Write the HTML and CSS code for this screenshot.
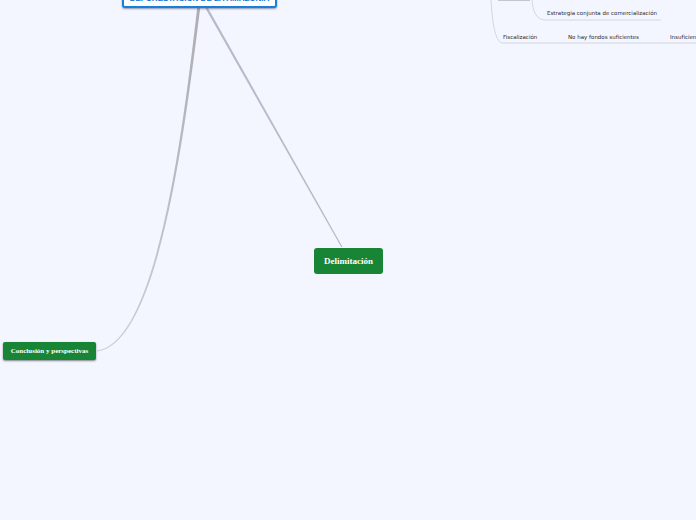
FILE: index.html
```html
<!DOCTYPE html>
<html lang="es">
<head>
<meta charset="utf-8">
<title>Deforestación de la Amazonía</title>
<link rel="stylesheet" href="styles.css">
</head>
<body>
<main class="canvas">
  <svg class="links" width="696" height="520" viewBox="0 0 696 520" aria-hidden="true">
    <defs>
      <linearGradient id="fade" x1="0" y1="0" x2="0" y2="1">
        <stop offset="0" stop-color="#adaeb2"/>
        <stop offset="0.5" stop-color="#b9bbc4"/>
        <stop offset="1" stop-color="#cbced8"/>
      </linearGradient>
    </defs>
    <path class="fill-grey" d="M197.2 8 L200.2 8 C186 120 160 345 97 351.4 L97 350.6 C158 343 184 120 197.2 8 Z"/>
    <path class="fill-blue" d="M205.3 8 L208 8 L342.6 247 L341.2 247 Z"/>
    <path class="thin" d="M491 0 C492 16 494 43 503 43 L696 43"/>
    <path class="thin" d="M532 0 C533 10 535 20 546 20 L661 20"/>
    <path class="thick" d="M498 0 L530 0"/>
  </svg>

  <div class="root"><span class="root-text">DEFORESTACIÓN DE LA AMAZONÍA</span></div>
  <div class="topic topic-delim">Delimitación</div>
  <div class="topic topic-conc">Conclusión y perspectivas</div>

  <span class="leaf leaf-strategy">Estrategia conjunta de comercialización</span>
  <span class="leaf leaf-fiscal">Fiscalización</span>
  <span class="leaf leaf-funds">No hay fondos suficientes</span>
  <span class="leaf leaf-insuf">Insuficiente</span>
</main>
</body>
</html>
```
FILE: styles.css
```css
html, body {
  margin: 0;
  padding: 0;
  height: 100%;
  background: #f3f6ff;
  overflow: hidden;
}

.canvas {
  position: relative;
  width: 696px;
  height: 520px;
  overflow: hidden;
  background: #f3f6ff;
}

.links {
  position: absolute;
  left: 0;
  top: 0;
}

.fill-grey { fill: url(#fade); }
.fill-blue { fill: #b6bacb; }

.thin {
  fill: none;
  stroke: #d3d6df;
  stroke-width: 1;
}

.thick {
  fill: none;
  stroke: #c4c6cc;
  stroke-width: 2;
}

.root {
  position: absolute;
  left: 122px;
  top: -20px;
  width: 155px;
  height: 28px;
  box-sizing: border-box;
  display: flex;
  align-items: flex-end;
  justify-content: center;
  background: #fff;
  border: 2px solid #1a7fd6;
  border-radius: 3px;
  box-shadow: 0 1px 2px rgba(60, 70, 110, 0.55);
}

.root-text {
  font: bold 8px/10px "Liberation Sans", Arial, sans-serif;
  color: #0a74d8;
  white-space: nowrap;
  position: relative;
  top: -2px;
}

.topic {
  position: absolute;
  box-sizing: border-box;
  display: flex;
  align-items: center;
  justify-content: center;
  background: #178535;
  color: #fff;
  font-family: "Liberation Serif", "Times New Roman", serif;
  font-weight: bold;
  white-space: nowrap;
}

.topic-delim {
  left: 314px;
  top: 248px;
  width: 69px;
  height: 26px;
  font-size: 9px;
  border-radius: 3px;
}

.topic-conc {
  left: 3px;
  top: 342px;
  width: 93px;
  height: 18px;
  font-size: 7px;
  border-radius: 2px;
  box-shadow: 0 1px 2px rgba(50, 50, 60, 0.6);
}

.leaf {
  position: absolute;
  font: 5.5px/8px "DejaVu Sans", Verdana, sans-serif;
  color: #2b2b33;
  white-space: nowrap;
}

.leaf-strategy { left: 547px; top: 9px; }
.leaf-fiscal { left: 503px; top: 33px; }
.leaf-funds { left: 568px; top: 33px; }
.leaf-insuf { left: 670px; top: 33px; }
```
